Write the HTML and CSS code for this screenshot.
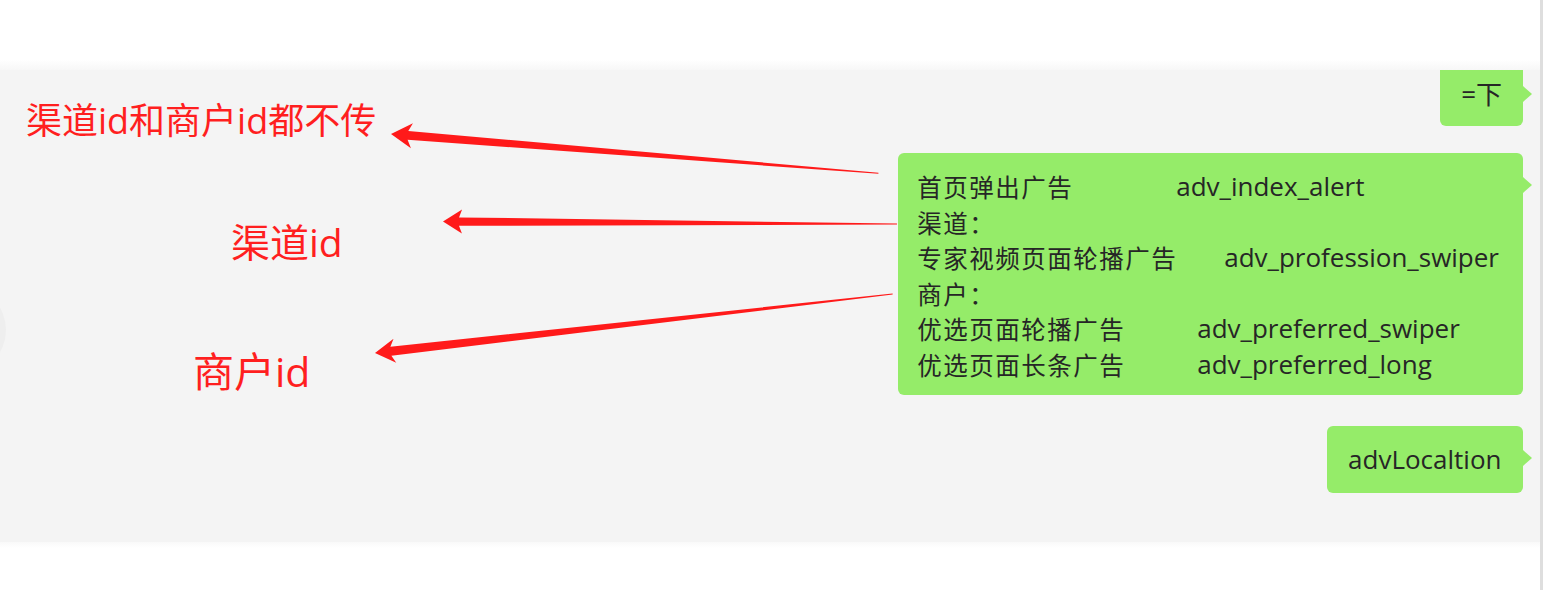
FILE: index.html
```html
<!DOCTYPE html>
<html lang="zh-CN">
<head>
<meta charset="utf-8">
<title>Chat annotation</title>
<link rel="stylesheet" href="styles.css">
</head>
<body>
<div class="page">
  <div class="main">
    <div class="top-space"></div>
    <div class="panel">
      <div class="edge-button"></div>
      <div class="chat">
        <div class="bubble bubble-short">=下</div>
        <div class="bubble bubble-list">
          <div class="row"><span class="label">首页弹出广告</span><span class="code gap-a">adv_index_alert</span></div>
          <div class="row"><span class="label">渠道：</span></div>
          <div class="row"><span class="label">专家视频页面轮播广告</span><span class="code gap-b">adv_profession_swiper</span></div>
          <div class="row"><span class="label">商户：</span></div>
          <div class="row"><span class="label">优选页面轮播广告</span><span class="code gap-c">adv_preferred_swiper</span></div>
          <div class="row"><span class="label">优选页面长条广告</span><span class="code gap-c">adv_preferred_long</span></div>
        </div>
        <div class="bubble bubble-word">advLocaltion</div>
      </div>
    </div>
    <div class="bottom-space"></div>
  </div>
  <div class="scrollbar"></div>
  <div class="rest"></div>

  <div class="note note-1">渠道id和商户id都不传</div>
  <div class="note note-2">渠道id</div>
  <div class="note note-3">商户id</div>

  <svg class="arrows" width="1546" height="590" viewBox="0 0 1546 590">
    <g fill="#ff1a1a">
      <path transform="translate(391,134) rotate(4.61)" d="M0,0 L21,-12.5 L17,-4.5 L489,-0.5 L489,0.5 L17,4.5 L21,12.5 Z"/>
      <path transform="translate(443,221.5) rotate(0.33)" d="M0,0 L19,-12 L16,-4.2 L454,-0.5 L454,0.5 L16,4.2 L19,12 Z"/>
      <path transform="translate(375,353) rotate(-6.5)" d="M0,0 L20,-12 L16,-4.5 L521,-0.5 L521,0.5 L16,4.5 L20,12 Z"/>
    </g>
  </svg>
</div>
</body>
</html>
```

FILE: styles.css
```css
html, body {
  margin: 0;
  padding: 0;
  background: #ffffff;
}

body {
  width: 1546px;
  height: 590px;
  overflow: hidden;
  font-family: "Open Sans", "Noto Sans CJK SC", sans-serif;
}

.page {
  position: relative;
  display: flex;
  width: 1546px;
  height: 590px;
}

.main {
  width: 1540px;
  display: flex;
  flex-direction: column;
}

.top-space {
  height: 70px;
  background: linear-gradient(#ffffff 85%, #f7f7f7);
}

.panel {
  position: relative;
  height: 472px;
  background: #f4f4f4;
  overflow: hidden;
}

.bottom-space {
  flex: 1;
  background: linear-gradient(#f9f9f9, #ffffff 6px);
}

.scrollbar {
  width: 3px;
  background: #dedede;
}

.rest {
  flex: 1;
  background: #ffffff;
}

.edge-button {
  position: absolute;
  left: -82px;
  top: 216px;
  width: 88px;
  height: 88px;
  border-radius: 50%;
  background: #eeeeee;
}

.chat {
  display: flex;
  flex-direction: column;
  align-items: flex-end;
  padding-right: 17px;
}

.bubble {
  position: relative;
  background: #95ec69;
  color: #262626;
  border-radius: 6px;
  font-size: 26px;
}

.bubble::after {
  content: "";
  position: absolute;
  right: -9px;
  top: 24px;
  border-left: 9px solid #95ec69;
  border-top: 8px solid transparent;
  border-bottom: 8px solid transparent;
}

.bubble-short {
  margin-top: -8px;
  height: 64px;
  line-height: 64px;
  padding: 0 21px;
}

.bubble-list {
  margin-top: 27px;
  padding: 16px 24px 12px 19px;
  line-height: 35.6px;
}

.row {
  display: flex;
  white-space: nowrap;
  height: 35.6px;
}

.label {
  font-family: "Noto Sans CJK SC", sans-serif;
  font-size: 24.5px;
  letter-spacing: 1.5px;
}

.code {
  font-size: 26px;
}

.gap-a { margin-left: 103px; }
.gap-b { margin-left: 47px; }
.gap-c { margin-left: 72px; }

.bubble-word {
  margin-top: 31px;
  padding: 15.5px 21.5px;
  line-height: 36px;
}

.note {
  position: absolute;
  color: #ff1f1f;
  white-space: nowrap;
  line-height: 1.2;
}

.note-1 {
  left: 26px;
  top: 99px;
  font-size: 36px;
}

.note-2 {
  left: 231px;
  top: 219px;
  font-size: 39px;
}

.note-3 {
  left: 193px;
  top: 347px;
  font-size: 41px;
}

.arrows {
  position: absolute;
  left: 0;
  top: 0;
  pointer-events: none;
}
```
